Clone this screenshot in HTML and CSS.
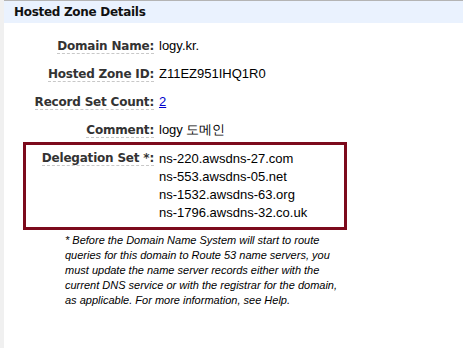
FILE: index.html
```html
<!DOCTYPE html>
<html lang="ko">
<head>
    <meta charset="UTF-8">
    <title>Hosted Zone Details</title>
    <link rel="stylesheet" href="styles.css">
</head>
<body>
<div class="panel">
    <div class="panel-title">Hosted Zone Details</div>
    <div class="details">
        <div class="row">
            <span class="label"><span class="term">Domain Name:</span></span>
            <span class="value">logy.kr.</span>
        </div>
        <div class="row">
            <span class="label"><span class="term">Hosted Zone ID:</span></span>
            <span class="value">Z11EZ951IHQ1R0</span>
        </div>
        <div class="row">
            <span class="label"><span class="term">Record Set Count:</span></span>
            <span class="value"><a href="#">2</a></span>
        </div>
        <div class="row last">
            <span class="label"><span class="term">Comment:</span></span>
            <span class="value">logy 도메인</span>
        </div>
        <div class="delegation">
            <div class="row">
                <span class="label"><span class="term">Delegation Set *:</span></span>
                <span class="value servers">
                    <span>ns-220.awsdns-27.com</span>
                    <span>ns-553.awsdns-05.net</span>
                    <span>ns-1532.awsdns-63.org</span>
                    <span>ns-1796.awsdns-32.co.uk</span>
                </span>
            </div>
        </div>
        <p class="note">* Before the Domain Name System will start to route queries for this domain to Route 53 name servers, you must update the name server records either with the current DNS service or with the registrar for the domain, as applicable. For more information, see Help.</p>
    </div>
</div>
</body>
</html>
```

FILE: styles.css
```css
body {
    margin: 0;
    background: #f0f0f0;
    font-family: "Liberation Sans", Arial, sans-serif;
    font-size: 13px;
    color: #000;
}

.panel {
    margin-left: 4px;
    min-height: 348px;
    background: #fff;
    border-top: 1px solid #b4b4b4;
}

.panel-title {
    background: #eaf2fe;
    height: 22px;
    line-height: 23px;
    padding-left: 10px;
    font-family: "DejaVu Sans", Verdana, sans-serif;
    font-weight: bold;
    font-size: 12px;
    letter-spacing: -0.3px;
    color: #111;
}

.details {
    padding-top: 15px;
}

.row {
    display: flex;
    align-items: flex-start;
    margin-bottom: 12px;
    line-height: 16px;
}

.row.last {
    margin-bottom: 4px;
}

.label {
    width: 150px;
    flex: none;
    text-align: right;
    padding-right: 5px;
    font-family: "DejaVu Sans", Verdana, sans-serif;
    font-weight: bold;
    font-size: 12px;
    letter-spacing: -0.2px;
    color: #333;
}

.term {
    border-bottom: 1px dashed #c8c8c8;
}

.value a {
    color: #00c;
}

.servers {
    display: flex;
    flex-direction: column;
    line-height: 18px;
}

.delegation {
    margin-left: 19px;
    width: 318px;
    border: 3px solid #7c0a1c;
    padding: 5px 0 5px;
}

.delegation .row {
    margin: 0 0 0 -22px;
}

.note {
    margin: 3px 0 0 61px;
    width: 275px;
    font-size: 11px;
    font-style: italic;
    line-height: 15px;
}
```
